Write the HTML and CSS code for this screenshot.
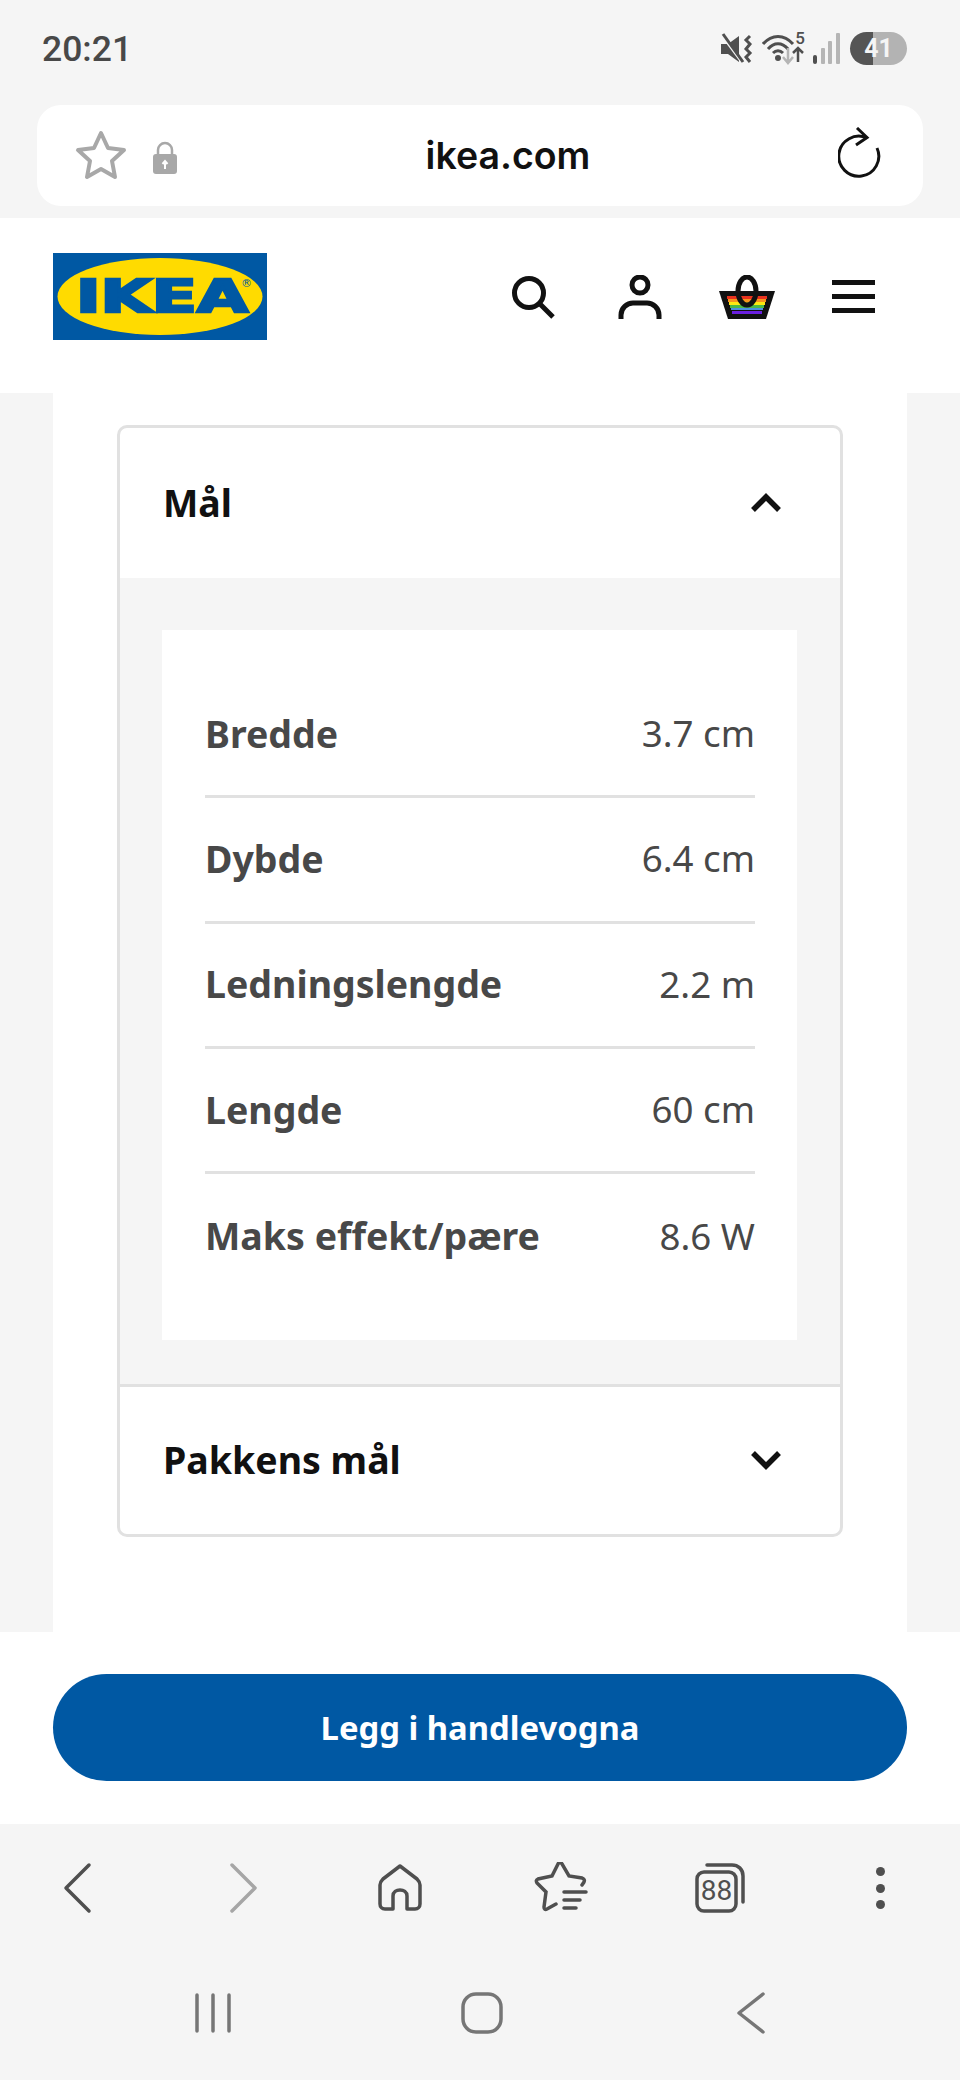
FILE: index.html
```html
<!DOCTYPE html>
<html>

<head>
    <title>IKEA - Mål</title>

    <link rel="stylesheet" href="styles.css">
</head>

<body>
    <div class="phone">
        <div class="status-bar">
            <span class="clock">20:21</span>
            <div class="status-icons">
                <svg width="33" height="32" viewBox="0 0 33 32">
                    <path d="M1 11h7L19 3v26L8 21H1z" fill="#4f4f4f"/>
                    <path d="M2 2l20 27" stroke="#f5f5f5" stroke-width="3"/>
                    <path d="M3 1l20 28" stroke="#4f4f4f" stroke-width="3"/>
                    <path d="M30 3l-4 4 4 4-4 5 4 4-4 4 4 5" fill="none" stroke="#4f4f4f" stroke-width="3"/>
                </svg>
                <div class="wifi">
                    <svg width="44" height="32" viewBox="0 0 44 32">
                        <path d="M2 11C11 1 23 1 32 11" fill="none" stroke="#4f4f4f" stroke-width="3"/>
                        <path d="M7 16C13 9 21 9 27 16" fill="none" stroke="#4f4f4f" stroke-width="3"/>
                        <path d="M12 20C15 17 19 17 22 20" fill="none" stroke="#4f4f4f" stroke-width="3"/>
                        <circle cx="17" cy="25" r="3" fill="#4f4f4f"/>
                        <path d="M27 15v15M22 24l5 6 5-6" fill="none" stroke="#b5b5b5" stroke-width="2.5"/>
                        <path d="M37 29V15M32 20l5-5 5 5" fill="none" stroke="#4f4f4f" stroke-width="2.5"/>
                    </svg>
                    <span class="wifi-num">5</span>
                </div>
                <svg width="27" height="31" viewBox="0 0 27 31">
                    <rect x="0" y="22" width="4" height="9" rx="2" fill="#4f4f4f"/>
                    <rect x="8" y="15" width="4" height="16" rx="1" fill="#b5b5b5"/>
                    <rect x="15" y="8" width="4" height="23" rx="1" fill="#b5b5b5"/>
                    <rect x="23" y="0" width="4" height="31" rx="1" fill="#b5b5b5"/>
                </svg>
                <div class="battery"><span>41</span></div>
            </div>
        </div>

        <div class="url-wrap">
            <div class="url-bar">
                <svg class="url-star" width="52" height="52" viewBox="0 0 52 52">
                    <path d="M26 3l7 15 16 2-12 11 3 16-14-8-14 8 3-16L3 20l16-2z" fill="none" stroke="#a8a8a8" stroke-width="4" stroke-linejoin="round"/>
                </svg>
                <svg class="url-lock" width="26" height="34" viewBox="0 0 26 34">
                    <path d="M6 15V9a7 7 0 0 1 14 0v6" fill="none" stroke="#a8a8a8" stroke-width="2.5"/>
                    <rect x="1" y="13" width="24" height="20" rx="3" fill="#a8a8a8"/>
                    <path d="M13 28v-6M10.5 23l2.5-3 2.5 3" fill="none" stroke="#fff" stroke-width="2"/>
                </svg>
                <span class="url-text">ikea.com</span>
                <svg class="url-reload" width="44" height="52" viewBox="0 0 44 52">
                    <path d="M29 11A20 20 0 1 0 39 21" fill="none" stroke="#111" stroke-width="3"/>
                    <path d="M19 1l10 9.500-11 7.500" fill="none" stroke="#111" stroke-width="3"/>
                </svg>
            </div>
        </div>

        <header class="site-header">
            <svg class="logo" width="214" height="87" viewBox="0 0 214 87">
                <rect width="214" height="87" fill="#0058a3"/>
                <ellipse cx="107" cy="43.500" rx="102.500" ry="38.500" fill="#ffdb00"/>
                <text class="logo-text" x="23" y="59" textLength="172" lengthAdjust="spacingAndGlyphs">IKEA</text>
                <text class="logo-reg" x="188" y="34">®</text>
            </svg>
            <nav class="header-icons">
                <a class="header-icon">
                    <svg width="44" height="44" viewBox="0 0 44 44">
                        <circle cx="18" cy="18" r="14.500" fill="none" stroke="#111" stroke-width="5"/>
                        <path d="M28 28l14 14" stroke="#111" stroke-width="5"/>
                    </svg>
                </a>
                <a class="header-icon">
                    <svg width="44" height="44" viewBox="0 0 44 44">
                        <circle cx="22" cy="10" r="8" fill="none" stroke="#111" stroke-width="5"/>
                        <path d="M3 44v-4c0-7 6-12 12-12h14c6 0 12 5 12 12v4" fill="none" stroke="#111" stroke-width="5"/>
                    </svg>
                </a>
                <a class="header-icon">
                    <svg width="56" height="44" viewBox="0 0 56 44">
                        <path d="M0 16h56l-9 28H9z" fill="#111"/>
                        <rect x="8" y="21" width="40" height="3" fill="#e8321e"/>
                        <rect x="9" y="24" width="38" height="3" fill="#f7941d"/>
                        <rect x="10" y="27" width="36" height="3" fill="#fde910"/>
                        <rect x="11" y="30" width="34" height="3" fill="#4cb848"/>
                        <rect x="12" y="33" width="32" height="2" fill="#4a90e2"/>
                        <rect x="13" y="36" width="30" height="3" fill="#6a1fe0"/>
                        <ellipse cx="28" cy="16" rx="9" ry="14" fill="none" stroke="#111" stroke-width="5"/>
                    </svg>
                </a>
                <a class="header-icon">
                    <span class="burger"><i></i><i></i><i></i></span>
                </a>
            </nav>
        </header>

        <main class="page">
            <div class="content">
                <div class="accordion">
                    <div class="acc-head">
                        <span class="acc-title">Mål</span>
                        <svg class="chevron" width="32" height="20" viewBox="0 0 32 20">
                            <path d="M3 17L16 4l13 13" fill="none" stroke="#111" stroke-width="5.500"/>
                        </svg>
                    </div>
                    <div class="acc-panel">
                        <div class="spec-card">
                            <div class="spec-row"><span class="spec-name">Bredde</span><span class="spec-value">3.7 cm</span></div>
                            <div class="spec-row"><span class="spec-name">Dybde</span><span class="spec-value">6.4 cm</span></div>
                            <div class="spec-row"><span class="spec-name">Ledningslengde</span><span class="spec-value">2.2 m</span></div>
                            <div class="spec-row"><span class="spec-name">Lengde</span><span class="spec-value">60 cm</span></div>
                            <div class="spec-row"><span class="spec-name">Maks effekt/pære</span><span class="spec-value">8.6 W</span></div>
                        </div>
                    </div>
                    <div class="acc-head acc-last">
                        <span class="acc-title">Pakkens mål</span>
                        <svg class="chevron" width="32" height="20" viewBox="0 0 32 20">
                            <path d="M3 3l13 13L29 3" fill="none" stroke="#111" stroke-width="5.500"/>
                        </svg>
                    </div>
                </div>
            </div>
        </main>

        <div class="buy-bar">
            <button class="buy-btn">Legg i handlevogna</button>
        </div>

        <div class="toolbar">
            <svg class="tool-back" width="48" height="52" viewBox="0 0 48 52">
                <path d="M35 3L12 26l23 23" fill="none" stroke="#4f4f4f" stroke-width="3.500" stroke-linecap="round" stroke-linejoin="round"/>
            </svg>
            <svg class="tool-forward" width="48" height="52" viewBox="0 0 48 52">
                <path d="M13 3l23 23-23 23" fill="none" stroke="#a6a6a6" stroke-width="3.500" stroke-linecap="round" stroke-linejoin="round"/>
            </svg>
            <svg width="48" height="52" viewBox="0 0 48 52">
                <path d="M24 4L7 17c-2 2-3 3-3 6v19c0 3 2 5 5 5h8V34c0-8 14-8 14 0v13h8c3 0 5-2 5-5V23c0-3-1-4-3-6z" fill="none" stroke="#4f4f4f" stroke-width="3.500" stroke-linejoin="round"/>
            </svg>
            <svg width="56" height="52" viewBox="0 0 56 52">
                <path d="M50 23l2-3c1-2 0-3-2-4l-13-2-7-12c-1-2-3-2-4 0l-6 12-14 3c-2 1-2 2-1 4l9 9-2 15c0 2 1 3 3 2l9-5" fill="none" stroke="#4f4f4f" stroke-width="3.500" stroke-linecap="round"/>
                <path d="M32 30h22M32 38h16M32 46h12" stroke="#4f4f4f" stroke-width="3.500" stroke-linecap="round"/>
            </svg>
            <div class="tabs-icon">
                <svg width="50" height="50" viewBox="0 0 50 50">
                    <path d="M12 2h25c6 0 11 4 11 11v26" fill="none" stroke="#4f4f4f" stroke-width="3.500" stroke-linecap="round"/>
                    <rect x="2" y="9" width="39" height="39" rx="7" fill="none" stroke="#4f4f4f" stroke-width="3.500"/>
                </svg>
                <span class="tabs-count">88</span>
            </div>
            <div class="dots"><i></i><i></i><i></i></div>
        </div>

        <div class="nav-bar">
            <svg width="40" height="42" viewBox="0 0 40 42">
                <path d="M4 3v36M20 3v36M36 3v36" stroke="#767676" stroke-width="3.500" stroke-linecap="round"/>
            </svg>
            <svg width="44" height="44" viewBox="0 0 44 44">
                <rect x="3" y="3" width="38" height="38" rx="13" fill="none" stroke="#767676" stroke-width="3.500"/>
            </svg>
            <svg width="30" height="44" viewBox="0 0 30 44">
                <path d="M27 3L3 22l24 19" fill="none" stroke="#767676" stroke-width="3.500" stroke-linecap="round" stroke-linejoin="round"/>
            </svg>
        </div>
    </div>
</body>

</html>
```

FILE: styles.css
```css
* {
    box-sizing: border-box;
}

body {
    margin: 0;
    background-color: #f5f5f5;
    font-family: "Noto Sans", sans-serif;
}

.phone {
    display: flex;
    flex-direction: column;
    height: 2080px;
    overflow: hidden;
}

/* status bar */
.status-bar {
    height: 105px;
    padding: 0 53px 8px 42px;
    display: flex;
    align-items: center;
    justify-content: space-between;
}

.clock {
    font-family: Roboto, sans-serif;
    font-size: 35.500px;
    font-weight: 500;
    color: #484848;
}

.status-icons {
    display: flex;
    align-items: center;
    gap: 8px;
}

.wifi {
    position: relative;
    width: 44px;
    height: 32px;
}

.wifi-num {
    position: absolute;
    top: -5px;
    right: 0;
    font-family: Roboto, sans-serif;
    font-size: 17px;
    font-weight: 500;
    line-height: 20px;
    color: #4f4f4f;
}

.battery {
    width: 57px;
    height: 33px;
    margin-left: 2px;
    border-radius: 17px;
    background: linear-gradient(to right, #555555 40%, #b3b3b3 40%);
    display: flex;
    align-items: center;
    justify-content: center;
    font-family: Roboto, sans-serif;
    font-size: 25px;
    font-weight: 700;
    color: #f5f5f5;
}

/* url bar */
.url-wrap {
    height: 113px;
    padding: 0 37px 12px;
}

.url-bar {
    height: 101px;
    background-color: #fff;
    border-radius: 24px;
    display: flex;
    align-items: center;
    padding: 0 41px 0 38px;
}

.url-lock {
    margin-left: 25px;
    margin-top: 4px;
}

.url-text {
    flex: 1;
    text-align: center;
    font-family: Inter, sans-serif;
    font-size: 37.500px;
    font-weight: 600;
    color: #111;
}

.url-reload {
    margin-top: -5px;
}

/* site header */
.site-header {
    height: 175px;
    background-color: #fff;
    padding: 0 53px 18px;
    display: flex;
    align-items: center;
    justify-content: space-between;
}

.logo-text {
    font-family: "DejaVu Sans", sans-serif;
    font-size: 44px;
    font-weight: 700;
    fill: #0058a3;
    stroke: #0058a3;
    stroke-width: 2.500px;
}

.logo-reg {
    font-family: "DejaVu Sans", sans-serif;
    font-size: 11px;
    fill: #0058a3;
}

.header-icons {
    display: flex;
}

.header-icon {
    width: 107px;
    display: flex;
    justify-content: center;
}

.burger {
    width: 43px;
    height: 44px;
    padding: 5px 0 6px;
    display: flex;
    flex-direction: column;
    justify-content: space-between;
}

.burger i {
    display: block;
    height: 5px;
    background-color: #111;
}

/* page content */
.page {
    height: 1239px;
    padding: 0 53px;
}

.content {
    height: 100%;
    background-color: #fff;
    padding: 32px 64px 0;
}

.accordion {
    border: 3px solid #e1e1e1;
    border-radius: 10px;
    background-color: #fff;
    overflow: hidden;
}

.acc-head {
    height: 150px;
    padding: 0 58px 2px 43px;
    display: flex;
    align-items: center;
    justify-content: space-between;
}

.acc-last {
    border-top: 3px solid #e1e1e1;
}

.acc-title {
    font-size: 37.500px;
    font-weight: 700;
    color: #111;
}

.chevron {
    margin-top: 2px;
}

.acc-panel {
    background-color: #f5f5f5;
    padding: 52px 43px 44px 42px;
}

.spec-card {
    background-color: #fff;
    padding: 43px 42px 40.500px 43px;
}

.spec-row {
    height: 125.300px;
    padding-bottom: 2px;
    display: flex;
    align-items: center;
    justify-content: space-between;
    border-bottom: 3px solid #e1e1e1;
    color: #484848;
}

.spec-row:last-child {
    border-bottom: none;
}

.spec-name {
    font-size: 37.500px;
    font-weight: 700;
}

.spec-value {
    font-size: 36.700px;
    font-weight: 400;
}

/* buy button */
.buy-bar {
    height: 192px;
    background-color: #fff;
    padding: 42px 53px 0;
}

.buy-btn {
    display: block;
    width: 100%;
    height: 107px;
    border: none;
    border-radius: 54px;
    background-color: #0058a3;
    color: #fff;
    font-family: "Noto Sans", sans-serif;
    font-size: 32.800px;
    font-weight: 700;
}

/* browser toolbar */
.toolbar {
    height: 128px;
    display: grid;
    grid-template-columns: repeat(6, 160px);
    align-items: center;
    justify-items: center;
}

.tool-back {
    margin-right: 5px;
}

.tool-forward {
    margin-left: 5px;
}

.tabs-icon {
    position: relative;
    width: 50px;
    height: 50px;
}

.tabs-count {
    position: absolute;
    left: 3px;
    top: 8px;
    width: 37px;
    text-align: center;
    font-family: Roboto, sans-serif;
    font-size: 28px;
    line-height: 40px;
    color: #4f4f4f;
}

.dots {
    height: 42px;
    display: flex;
    flex-direction: column;
    justify-content: space-between;
}

.dots i {
    display: block;
    width: 9px;
    height: 9px;
    border-radius: 50%;
    background-color: #4f4f4f;
}

/* android nav */
.nav-bar {
    flex: 1;
    padding: 0 0 6px 4px;
    display: grid;
    grid-template-columns: repeat(3, 269px);
    justify-content: center;
    align-items: center;
    justify-items: center;
}
```
